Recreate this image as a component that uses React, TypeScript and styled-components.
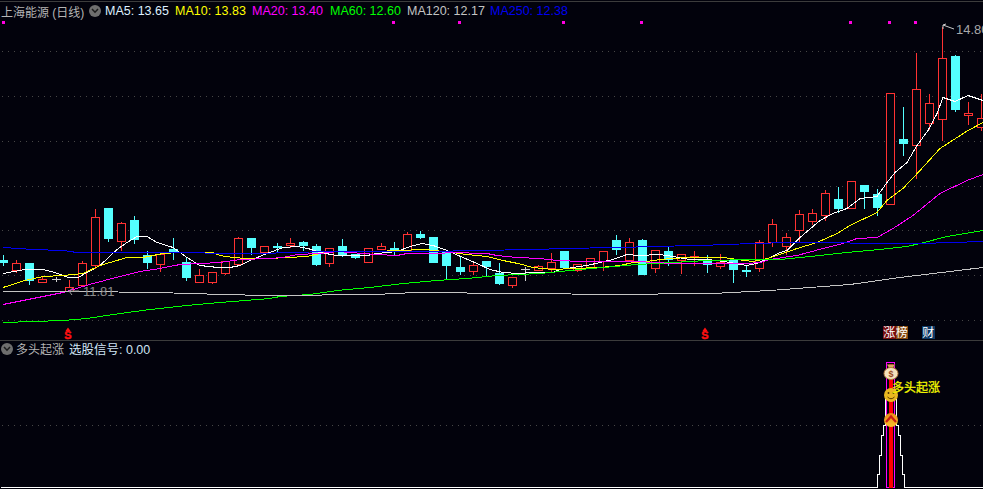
import styled, { createGlobalStyle } from "styled-components";

const BG = "#02020c";
const RED = "#ff3232";
const CYAN = "#54ffff";

const GlobalStyle = createGlobalStyle`
  html, body {
    margin: 0;
    padding: 0;
    background: ${BG};
  }
`;

const Frame = styled.div`
  width: 983px;
  height: 489px;
  overflow: hidden;
  display: flex;
  flex-direction: column;
  background: ${BG};
  font-family: "Liberation Sans", "Noto Sans CJK SC", sans-serif;
`;

const TopRule = styled.div`
  height: 1px;
  margin-top: 1px;
  background: #3c3c3c;
`;

const Divider = styled.div`
  height: 1px;
  background: #3c3c3c;
`;

const Legend = styled.div<{ $height: number }>`
  height: ${(p) => p.$height}px;
  display: flex;
  align-items: center;
  padding-left: 1px;
  font-size: 12.5px;
  white-space: nowrap;
`;

const LegendText = styled.span<{ $color: string; $width: number }>`
  color: ${(p) => p.$color};
  width: ${(p) => p.$width}px;
  flex: none;
`;

const Title = styled.span`
  color: #b4b4b4;
  width: 88px;
  flex: none;
  font-size: 12px;
`;

const SmallTitle = styled(Title)`
  width: 53px;
  margin-left: -1px;
`;

const Badge = styled.span`
  width: 12px;
  height: 12px;
  flex: none;
  border-radius: 50%;
  background: #6e6e6e;
  display: flex;
  align-items: center;
  justify-content: center;
  margin-right: 4px;
`;

const Chart = styled.svg`
  display: block;
  flex: none;
  overflow: visible;
  text {
    font-family: "Liberation Sans", "Noto Sans CJK SC", sans-serif;
  }
`;

// cx, body top, body bottom, wick top, wick bottom, kind
type Kind = "r" | "c" | "w";
type Candle = [number, number, number, number, number, Kind];

const CANDLES: Candle[] = [
  [3, 260, 263, 255, 266, "c"],
  [16, 263, 270, 260, 273, "r"],
  [29, 263, 281, 263, 285, "c"],
  [42, 279, 282, 276, 282, "r"],
  [56, 279, 279, 277, 282, "w"],
  [69, 287, 291, 280, 291, "r"],
  [82, 263, 285, 261, 285, "r"],
  [95, 217, 265, 209, 269, "r"],
  [108, 208, 239, 208, 242, "c"],
  [121, 223, 241, 222, 251, "r"],
  [134, 220, 240, 216, 244, "c"],
  [147, 255, 263, 251, 269, "c"],
  [160, 254, 264, 254, 272, "r"],
  [173, 249, 252, 238, 260, "c"],
  [186, 262, 278, 257, 281, "c"],
  [199, 275, 282, 269, 282, "r"],
  [212, 272, 282, 272, 284, "r"],
  [225, 261, 273, 261, 275, "r"],
  [238, 238, 264, 237, 264, "r"],
  [251, 238, 248, 238, 255, "c"],
  [264, 246, 252, 246, 252, "r"],
  [277, 246, 248, 243, 252, "c"],
  [290, 243, 245, 238, 248, "r"],
  [303, 242, 246, 241, 251, "c"],
  [316, 246, 265, 244, 266, "c"],
  [329, 248, 263, 248, 267, "r"],
  [342, 246, 255, 239, 257, "c"],
  [355, 254, 258, 254, 259, "c"],
  [368, 248, 262, 248, 262, "r"],
  [381, 246, 249, 243, 250, "r"],
  [394, 248, 251, 242, 255, "c"],
  [407, 234, 250, 232, 250, "r"],
  [420, 234, 238, 231, 239, "c"],
  [433, 237, 263, 237, 263, "c"],
  [446, 252, 266, 252, 280, "c"],
  [460, 267, 272, 257, 275, "c"],
  [473, 265, 271, 262, 275, "r"],
  [486, 261, 267, 261, 276, "c"],
  [499, 273, 284, 263, 285, "c"],
  [512, 277, 285, 277, 288, "r"],
  [525, 269, 269, 267, 281, "w"],
  [538, 266, 270, 265, 270, "r"],
  [551, 262, 268, 253, 272, "r"],
  [564, 251, 268, 251, 268, "c"],
  [577, 264, 270, 264, 272, "r"],
  [590, 258, 268, 258, 268, "r"],
  [603, 251, 261, 251, 271, "r"],
  [616, 240, 250, 235, 255, "c"],
  [629, 242, 260, 238, 262, "r"],
  [642, 240, 275, 239, 275, "c"],
  [655, 250, 268, 250, 273, "r"],
  [668, 251, 260, 247, 266, "c"],
  [681, 254, 260, 254, 274, "r"],
  [694, 256, 257, 251, 266, "r"],
  [707, 260, 265, 255, 273, "c"],
  [720, 262, 266, 254, 269, "r"],
  [733, 260, 270, 260, 283, "c"],
  [746, 270, 272, 266, 277, "c"],
  [759, 242, 268, 240, 272, "r"],
  [772, 224, 242, 219, 247, "r"],
  [786, 237, 246, 233, 255, "r"],
  [799, 214, 230, 210, 242, "r"],
  [812, 213, 221, 209, 225, "r"],
  [825, 193, 215, 190, 221, "r"],
  [838, 199, 209, 187, 213, "c"],
  [851, 181, 208, 181, 209, "r"],
  [864, 185, 192, 185, 209, "c"],
  [877, 194, 208, 189, 216, "c"],
  [890, 93, 204, 93, 204, "r"],
  [903, 139, 144, 107, 156, "c"],
  [916, 89, 145, 53, 179, "r"],
  [929, 103, 123, 94, 130, "r"],
  [942, 58, 119, 27, 141, "r"],
  [955, 56, 110, 55, 112, "c"],
  [968, 113, 115, 102, 125, "r"],
  [981, 118, 127, 94, 131, "r"],
];

const MA5 = "3,273 25,269 43,269 55,272 68,277 78,277 87,272 100,265 117,249 127,242 137,236 147,236 157,242 173,247 187,257 200,265 218,267 230,267 240,265 250,260 267,253 283,247 297,246 308,248 320,252 337,255 367,255 377,253 397,251 410,246 422,243 433,245 447,250 463,257 477,263 490,269 503,272 518,273 533,272 553,272 560,269 573,267 587,265 600,262 613,259 627,254 639,255 660,254 673,256 690,259 707,259 717,260 730,262 747,265 757,263 770,257 780,252 787,250 800,237 820,220 833,213 847,208 860,198 877,196 887,182 895,172 907,162 917,145 928,130 937,113 943,97 955,101 968,95 983,100";
const MA10 = "3,287 25,280 43,276 63,275 83,273 100,265 127,257 143,257 163,253 180,252 213,252 220,255 233,257 247,258 270,258 287,257 307,256 320,253 333,251 377,251 397,250 425,249 452,252 467,254 487,256 503,260 518,263 533,267 553,269 573,268 600,267 620,265 633,262 647,261 660,259 673,258 688,257 723,257 737,259 753,261 767,258 780,254 797,248 817,242 837,233 850,225 877,212 887,200 903,188 920,170 940,148 968,130 983,122";
const MA20 = "3,304 33,298 63,292 93,283 120,276 140,271 160,268 180,264 220,262 240,259 270,258 283,257 297,254 320,253 337,251 363,253 377,254 397,255 407,253 440,253 450,252 487,253 497,255 517,257 540,258 557,260 583,261 637,261 673,263 703,263 713,263 747,263 760,262 770,259 783,257 797,255 823,248 843,243 857,238 877,237 893,228 913,215 940,193 967,180 983,174";
const MA60 = "3,322 33,321 63,320 87,318 120,313 150,309 187,305 220,302 270,298 280,296 310,294 337,290 370,287 403,283 437,280 467,278 497,275 540,273 570,270 603,267 637,264 673,262 707,260 753,259 780,259 820,255 847,252 880,249 907,246 920,243 947,236 983,230";
const MA120 = "3,291 36,291 83,291 153,292 193,293 220,294 270,295 375,294 415,292 518,293 623,294 653,294 663,293 713,293 770,290 850,284 900,277 983,267";
const MA250 = "3,247 33,249 63,250 77,252 140,252 270,253 283,252 337,251 437,251 470,250 540,249 558,248 623,247 650,246 700,245 753,243 790,242 830,242 870,243 920,243 983,241";

const LINES: [string, string][] = [
  [MA5, "#ffffff"],
  [MA10, "#ffff00"],
  [MA20, "#ff00ff"],
  [MA60, "#00ff00"],
  [MA120, "#c4c4c4"],
  [MA250, "#0000f0"],
];

const GRID_TOP = [51, 96, 141, 186, 230, 275, 320];
const MARKS = [3, 393, 459, 563, 641, 850, 889, 915];

const PYRAMID =
  "0,487 877,487 877,474 879,474 879,455 881,455 881,435 883,435 883,425 885,425 885,399 896,399 896,425 898,425 898,435 900,435 900,455 902,455 902,474 904,474 904,487 983,487";

const DashLine = ({ y }: { y: number }) => (
  <line x1={2} x2={983} y1={y + 0.5} y2={y + 0.5} stroke="#464646" strokeDasharray="1 5" />
);

const CandleMark = ({ c }: { c: Candle }) => {
  const [x, top, bottom, wickTop, wickBottom, kind] = c;
  const color = kind === "r" ? RED : kind === "c" ? CYAN : "#cfcfcf";
  const cx = x + 0.5;
  return (
    <g shapeRendering="crispEdges">
      <line x1={cx} x2={cx} y1={wickTop} y2={wickBottom} stroke={color} />
      {kind === "r" && (
        <rect x={x - 4 + 0.5} y={top + 0.5} width={8} height={bottom - top} fill={BG} stroke={color} />
      )}
      {kind === "c" && <rect x={x - 4} y={top} width={9} height={Math.max(bottom - top, 2)} fill={color} />}
      {kind === "w" && <line x1={x - 4} x2={x + 5} y1={top + 0.5} y2={top + 0.5} stroke={color} />}
    </g>
  );
};

const DollarMark = ({ x }: { x: number }) => (
  <g>
    <path d={`M${x - 2.5} 331 L${x} 327.5 L${x + 2.5} 331 Z`} fill="#ff1010" />
    <text x={x} y={339} textAnchor="middle" fontSize={11} fontWeight={700} fill="#ff1010" stroke="#ff1010" strokeWidth={0.4}>
      S
    </text>
  </g>
);

const MoneyBag = () => (
  <g>
    <path d="M887 364.5 L895 364.5 L893 368 L889 368 Z" fill="#d8a860" stroke="#8a5a2a" strokeWidth={0.5} />
    <ellipse cx={891} cy={373.5} rx={7} ry={6} fill="#f4e2bc" stroke="#b47a3c" />
    <text x={891} y={377} textAnchor="middle" fontSize={9} fontWeight={700} fill="#9a4a20">
      $
    </text>
  </g>
);

const Smiley = () => (
  <g>
    <circle cx={891} cy={395} r={7} fill="#e8b820" />
    <circle cx={888.5} cy={393} r={0.9} fill="#4a3000" />
    <circle cx={893.5} cy={393} r={0.9} fill="#4a3000" />
    <path d="M887.5 397 Q891 400.5 894.5 397" fill="none" stroke="#5a3a00" />
  </g>
);

const UpBall = () => (
  <g>
    <defs>
      <linearGradient id="ballFill" x1="0" y1="0" x2="0" y2="1">
        <stop offset="0" stopColor="#e88a18" />
        <stop offset="1" stopColor="#fbc02c" />
      </linearGradient>
    </defs>
    <circle cx={891} cy={420} r={7} fill="url(#ballFill)" />
    <path d="M886 422 L891 416.5 L896 422" fill="none" stroke="#c81c14" strokeWidth={2.2} />
  </g>
);

const ChevronDown = () => (
  <svg width={8} height={6} viewBox="0 0 8 6">
    <path d="M1 1 L4 4.2 L7 1" fill="none" stroke="#1c1c1c" strokeWidth={1.5} />
  </svg>
);

const TagBox = ({ x, bg, label }: { x: number; bg: string; label: string }) => (
  <g>
    <rect x={x} y={326} width={12.5} height={13} fill={bg} shapeRendering="crispEdges" />
    <text x={x + 6.2} y={337} textAnchor="middle" fontSize={12} fill="#ffffff">
      {label}
    </text>
  </g>
);

export default function App() {
  return (
    <Frame>
      <GlobalStyle />
      <TopRule />
      <Legend $height={18}>
        <Title>上海能源 (日线)</Title>
        <Badge>
          <ChevronDown />
        </Badge>
        <LegendText $color="#dff0ff" $width={70}>MA5: 13.65</LegendText>
        <LegendText $color="#ffff00" $width={77}>MA10: 13.83</LegendText>
        <LegendText $color="#ff00ff" $width={78}>MA20: 13.40</LegendText>
        <LegendText $color="#00ff00" $width={77}>MA60: 12.60</LegendText>
        <LegendText $color="#c4c4c4" $width={83}>MA120: 12.17</LegendText>
        <LegendText $color="#0000f0" $width={90}>MA250: 12.38</LegendText>
      </Legend>
      <Chart width={983} height={320} viewBox="0 20 983 320">
        {GRID_TOP.map((y) => (
          <DashLine key={y} y={y} />
        ))}
        {MARKS.map((x) => (
          <rect key={x} x={x - 1} y={21} width={3} height={3} fill="#ff00e0" shapeRendering="crispEdges" />
        ))}
        {CANDLES.map((c) => (
          <CandleMark key={c[0]} c={c} />
        ))}
        <g transform="translate(0 0.5)">
          {LINES.map(([points, color]) => (
            <polyline key={color} points={points} fill="none" stroke={color} shapeRendering="crispEdges" />
          ))}
        </g>
        <path d="M943 29 L943 25 L946 24 M943 25 L954 29" fill="none" stroke="#c8c8c8" />
        <text x={956} y={34} fontSize={13} fill="#a8a8a8">14.80</text>
        <path d="M79 291 L69 291 M73 288 L69 291 L72 295" fill="none" stroke="#9a9a9a" />
        <text x={83} y={296} fontSize={13} fill="#8c8c8c">11.81</text>
        <DollarMark x={68} />
        <DollarMark x={705} />
        <TagBox x={883} bg="#760c0c" label="涨" />
        <TagBox x={895.5} bg="#84480e" label="榜" />
        <TagBox x={922} bg="#0c3764" label="财" />
      </Chart>
      <Divider />
      <Legend $height={15}>
        <Badge>
          <ChevronDown />
        </Badge>
        <SmallTitle>多头起涨</SmallTitle>
        <LegendText $color="#cfe4f4" $width={90}>选股信号: 0.00</LegendText>
      </Legend>
      <Chart width={983} height={133} viewBox="0 356 983 133">
        <DashLine y={425} />
        <g transform="translate(0.5 0.5)">
          <polyline points={PYRAMID} fill="none" stroke="#ffffff" shapeRendering="crispEdges" />
        </g>
        <rect x={886.5} y={362.5} width={8} height={125} fill="none" stroke="#ff00ff" shapeRendering="crispEdges" />
        <rect x={889} y={364} width={4} height={124} fill="#ff0000" shapeRendering="crispEdges" />
        <MoneyBag />
        <Smiley />
        <UpBall />
        <text x={892} y={392} fontSize={12} fill="#ffff00" stroke="#e8f000" strokeWidth={0.3}>
          多头起涨
        </text>
      </Chart>
    </Frame>
  );
}
